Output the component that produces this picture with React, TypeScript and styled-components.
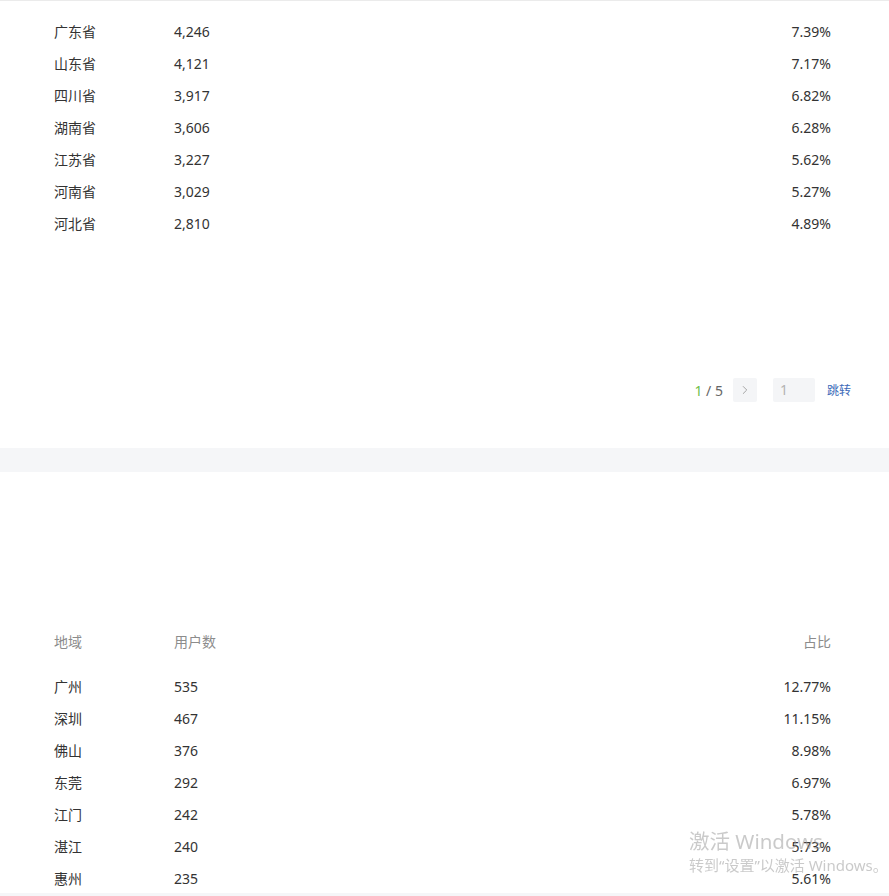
import styled, { createGlobalStyle } from "styled-components"
import { ChevronRight } from "lucide-react"

const GlobalStyle = createGlobalStyle`
  html, body {
    margin: 0;
    padding: 0;
    background: #f5f6f8;
  }
  body {
    font-family: "Noto Sans", "Noto Sans CJK SC", sans-serif;
    color: #333;
  }
`

const Page = styled.div`
  height: 896px;
  overflow: hidden;
  border-top: 1px solid #ebebeb;
  box-sizing: border-box;
  display: flex;
  flex-direction: column;
  gap: 24px;
`

const Card = styled.section<{ $height: number }>`
  background: #fff;
  height: ${p => p.$height}px;
  overflow: hidden;
  flex-shrink: 0;
  display: flex;
  flex-direction: column;
  padding: 0 58px 0 54px;
  box-sizing: border-box;
`

const Table = styled.div<{ $top: number }>`
  margin-top: ${p => p.$top}px;
  display: flex;
  flex-direction: column;
`

const Row = styled.div<{ $head?: boolean }>`
  display: grid;
  grid-template-columns: 120px 1fr 120px;
  height: 32px;
  align-items: center;
  font-size: 14px;
  color: ${p => (p.$head ? "#8c8c8c" : "#333")};
  margin-bottom: ${p => (p.$head ? "13px" : "0")};
`

const Right = styled.span`
  text-align: right;
`

const Pager = styled.div`
  margin-top: auto;
  margin-bottom: 46px;
  margin-right: -20px;
  display: flex;
  align-items: center;
  justify-content: flex-end;
  height: 24px;
  font-size: 14px;
  color: #666;
`

const PageInfo = styled.span`
  margin-right: 10px;
  b {
    font-weight: normal;
    color: #6cc04a;
  }
`

const NavButton = styled.button`
  width: 24px;
  height: 24px;
  border: none;
  border-radius: 2px;
  background: #f4f5f7;
  color: #999;
  display: flex;
  align-items: center;
  justify-content: center;
  padding: 0;
  margin-right: 16px;
`

const JumpInput = styled.div`
  width: 42px;
  height: 24px;
  border-radius: 2px;
  background: #f4f5f7;
  color: #b3b3b3;
  font-size: 14px;
  line-height: 24px;
  padding-left: 7px;
  box-sizing: border-box;
  margin-right: 12px;
`

const JumpLink = styled.span`
  font-size: 12px;
  color: #3c6ab8;
`

const Watermark = styled.div`
  position: fixed;
  left: 689px;
  top: 829px;
  color: rgba(150, 150, 150, 0.5);
  pointer-events: none;
  line-height: 1.2;
`

const WmTitle = styled.div`
  font-size: 20.5px;
`

const WmSub = styled.div`
  font-size: 15px;
  margin-top: 2px;
`

const provinces = [
  ["广东省", "4,246", "7.39%"],
  ["山东省", "4,121", "7.17%"],
  ["四川省", "3,917", "6.82%"],
  ["湖南省", "3,606", "6.28%"],
  ["江苏省", "3,227", "5.62%"],
  ["河南省", "3,029", "5.27%"],
  ["河北省", "2,810", "4.89%"],
]

const cities = [
  ["广州", "535", "12.77%"],
  ["深圳", "467", "11.15%"],
  ["佛山", "376", "8.98%"],
  ["东莞", "292", "6.97%"],
  ["江门", "242", "5.78%"],
  ["湛江", "240", "5.73%"],
  ["惠州", "235", "5.61%"],
]

export default function App() {
  return (
    <>
      <GlobalStyle />
      <Page>
        <Card $height={447}>
          <Table $top={14}>
            {provinces.map(([name, count, ratio]) => (
              <Row key={name}>
                <span>{name}</span>
                <span>{count}</span>
                <Right>{ratio}</Right>
              </Row>
            ))}
          </Table>
          <Pager>
            <PageInfo><b>1</b> / 5</PageInfo>
            <NavButton><ChevronRight size={14} strokeWidth={1.5} /></NavButton>
            <JumpInput>1</JumpInput>
            <JumpLink>跳转</JumpLink>
          </Pager>
        </Card>
        <Card $height={421}>
          <Table $top={153}>
            <Row $head>
              <span>地域</span>
              <span>用户数</span>
              <Right>占比</Right>
            </Row>
            {cities.map(([name, count, ratio]) => (
              <Row key={name}>
                <span>{name}</span>
                <span>{count}</span>
                <Right>{ratio}</Right>
              </Row>
            ))}
          </Table>
        </Card>
      </Page>
      <Watermark>
        <WmTitle>激活 Windows</WmTitle>
        <WmSub>转到“设置”以激活 Windows。</WmSub>
      </Watermark>
    </>
  )
}
